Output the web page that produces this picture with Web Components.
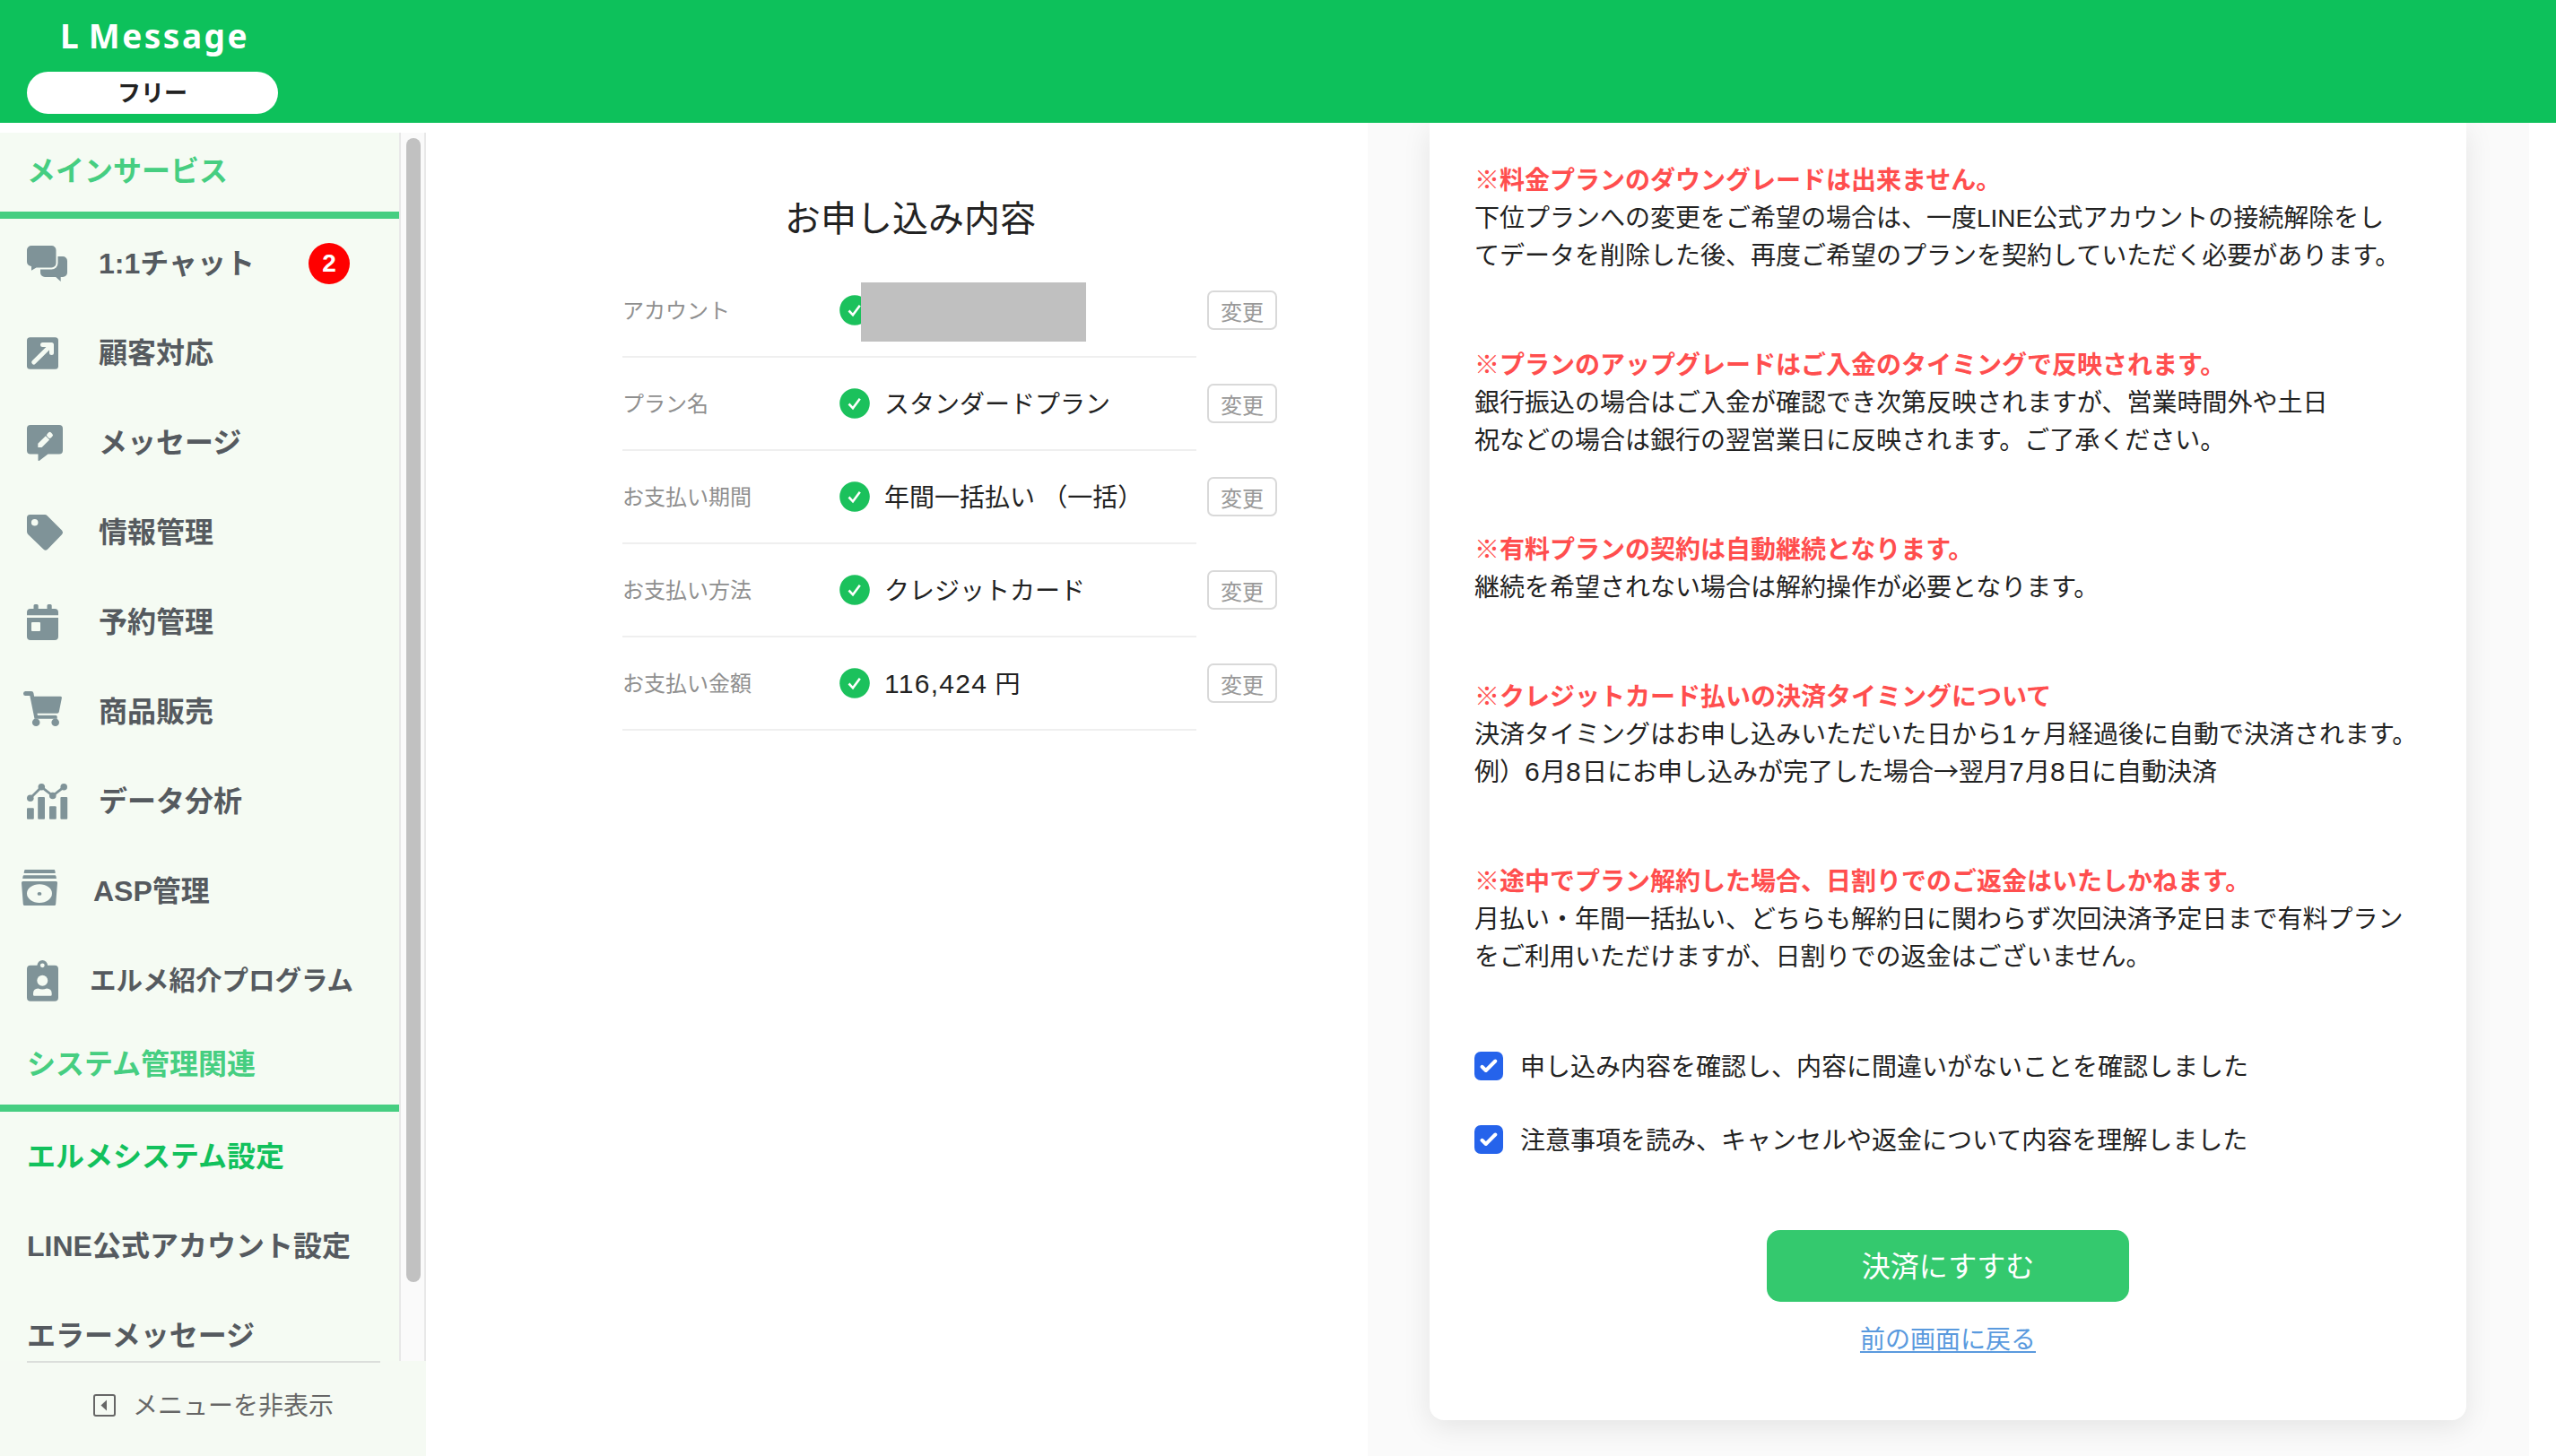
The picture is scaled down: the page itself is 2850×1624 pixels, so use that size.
<!DOCTYPE html>
<html lang="ja">
<head>
<meta charset="utf-8">
<title>L Message</title>
<style>
html, body {
  margin: 0;
  height: 100%;
}
body {
  display: flex;
  flex-direction: column;
  height: 1624px;
  overflow: hidden;
  background: #fff;
  color: #222;
  font-family: "Noto Sans CJK JP", sans-serif;
  font-size: 28px;
  line-height: 42px;
}
main {
  flex: 1;
  display: flex;
  min-height: 0;
}
.en, .num {
  font-family: "Liberation Sans", sans-serif;
  line-height: 0;
}
.num {
  font-size: 30px;
  letter-spacing: 1.3px;
}
</style>
</head>
<body>

<app-header plan="フリー">L Message</app-header>

<main>
  <side-nav>
    <nav-section>メインサービス</nav-section>
    <nav-item icon="chat" badge="2"><span class="en">1:1</span>チャット</nav-item>
    <nav-item icon="arrow">顧客対応</nav-item>
    <nav-item icon="message">メッセージ</nav-item>
    <nav-item icon="tag">情報管理</nav-item>
    <nav-item icon="calendar">予約管理</nav-item>
    <nav-item icon="cart">商品販売</nav-item>
    <nav-item icon="chart">データ分析</nav-item>
    <nav-item icon="asp" style="--icon-col: 104px"><span class="en">ASP</span>管理</nav-item>
    <nav-item icon="card" style="--icon-col: 100px; font-size: 29.5px">エルメ紹介プログラム</nav-item>
    <nav-section>システム管理関連</nav-section>
    <nav-item active>エルメシステム設定</nav-item>
    <nav-item><span class="en">LINE</span>公式アカウント設定</nav-item>
    <nav-item>エラーメッセージ</nav-item>
    <span slot="toggle">メニューを非表示</span>
  </side-nav>

  <order-summary heading="お申し込み内容">
    <summary-row label="アカウント" masked></summary-row>
    <summary-row label="プラン名">スタンダードプラン</summary-row>
    <summary-row label="お支払い期間">年間一括払い （一括）</summary-row>
    <summary-row label="お支払い方法">クレジットカード</summary-row>
    <summary-row label="お支払い金額"><span class="num">116,424</span> 円</summary-row>
  </order-summary>

  <confirm-panel>
    <notice-block heading="※料金プランのダウングレードは出来ません。">下位プランへの変更をご希望の場合は、一度<span class="en">LINE</span>公式アカウントの接続解除をし<br>てデータを削除した後、再度ご希望のプランを契約していただく必要があります。</notice-block>
    <notice-block heading="※プランのアップグレードはご入金のタイミングで反映されます。">銀行振込の場合はご入金が確認でき次第反映されますが、営業時間外や土日<br>祝などの場合は銀行の翌営業日に反映されます。ご了承ください。</notice-block>
    <notice-block heading="※有料プランの契約は自動継続となります。">継続を希望されない場合は解約操作が必要となります。</notice-block>
    <notice-block heading="※クレジットカード払いの決済タイミングについて">決済タイミングはお申し込みいただいた日から<span class="num">1</span>ヶ月経過後に自動で決済されます。<br>例）<span class="num">6</span>月<span class="num">8</span>日にお申し込みが完了した場合→翌月<span class="num">7</span>月<span class="num">8</span>日に自動決済</notice-block>
    <notice-block heading="※途中でプラン解約した場合、日割りでのご返金はいたしかねます。">月払い・年間一括払い、どちらも解約日に関わらず次回決済予定日まで有料プラン<br>をご利用いただけますが、日割りでの返金はございません。</notice-block>
    <check-item slot="checks">申し込み内容を確認し、内容に間違いがないことを確認しました</check-item>
    <check-item slot="checks">注意事項を読み、キャンセルや返金について内容を理解しました</check-item>
    <span slot="submit">決済にすすむ</span>
    <span slot="back">前の画面に戻る</span>
  </confirm-panel>
</main>

<script>
// Each icon is drawn in a 100x100 cell, the height of one menu row.
const ICONS = {
  chat: `
    <path d="M50 42h20a5 5 0 0 1 5 5v13a5 5 0 0 1-5 5h-2.3v5l-5.5-5H50a5 5 0 0 1-5-5V47a5 5 0 0 1 5-5z"/>
    <path stroke="#f5fbf3" stroke-width="4" paint-order="stroke" d="M35 30h22.500a5 5 0 0 1 5 5v14.500a5 5 0 0 1-5 5H40.500L35 57.700V53a5 5 0 0 1-5-5V35a5 5 0 0 1 5-5z"/>`,
  arrow: `
    <rect x="30" y="32.300" width="35" height="35.500" rx="3.500"/>
    <path fill="none" stroke="#f5fbf3" stroke-width="5" stroke-linecap="round" stroke-linejoin="round" d="M37.700 60L57 41M47.500 40.500h10v9"/>`,
  message: `
    <path d="M34 30h32a4 4 0 0 1 4 4v24.500a4 4 0 0 1-4 4H53.500L44 69.700q-1.500 1-1.500-.7v-6.500H34a4 4 0 0 1-4-4V34a4 4 0 0 1 4-4z"/>
    <path fill="#f5fbf3" d="M42.300 55v-4.300l8.600-8.500 4.300 4.300L46.600 55z"/>
    <rect fill="#f5fbf3" x="52.500" y="38.400" width="6" height="6" rx="2" transform="rotate(45 55.500 41.400)"/>`,
  tag: `
    <path fill-rule="evenodd" d="M33.500 30H50q1.500 0 2.700 1.200l16.500 16.500q1.700 2 0 4.300L53 68.800q-2.200 2-4.400 0L31.200 52Q30 50.500 30 49V33.500Q30 30 33.500 30zM38.700 34.900a3.800 3.800 0 1 0 0 7.600 3.800 3.800 0 0 0 0-7.600z"/>`,
  calendar: `
    <path fill-rule="evenodd" d="M37.500 35v-3.500q0-1.500 1.500-1.500h2.200q1.500 0 1.500 1.500V35h9.800v-3.500q0-1.500 1.500-1.500h2.200q1.500 0 1.500 1.500V35H61q4 0 4 4v3.300H30V39q0-4 4-4zM30 45h35v21q0 4-4 4H34q-4 0-4-4zM36 50q-1 0-1 1v8q0 1 1 1h8q1 0 1-1v-8q0-1-1-1z"/>`,
  cart: `
    <path d="M28.300 27H35q2 0 2.400 2l.7 3.700H67.500q1.800 0 1.400 1.800L65.800 50q-.4 1.700-2 1.700H41.500l.4 2H62q1.700 0 1.700 1.500v2.600H38.500L33.300 32h-5q-2.300 0-2.300-2.500T28.300 27z"/>
    <path stroke="#f5fbf3" stroke-width="1.400" d="M42 52.600h22"/>
    <circle cx="40.200" cy="61.700" r="4.300"/><circle cx="61.700" cy="61.700" r="4.300"/>`,
  chart: `
    <rect x="30" y="57.300" width="7.800" height="12.500" rx="1"/><rect x="42.200" y="45" width="7.800" height="24.800" rx="1"/>
    <rect x="55" y="55.200" width="7.800" height="14.600" rx="1"/><rect x="67.400" y="45" width="7.800" height="24.800" rx="1"/>
    <path fill="none" stroke="#7f9398" stroke-width="2.800" d="M33.800 46.200L46.300 33.800 58.800 43.500 71.200 33.800"/>
    <circle cx="33.800" cy="46.200" r="3.800"/><circle cx="46.300" cy="33.800" r="3.800"/><circle cx="58.800" cy="43.500" r="3.800"/><circle cx="71.200" cy="33.800" r="3.800"/>`,
  asp: `
    <path fill-rule="evenodd" d="M28 26h32.500q1 0 1.200 4H26.700q.3-4 1.300-4zM26.500 32.200h35q1.200 0 1.400 3.800H25.200q.2-3.800 1.300-3.800zM25.500 39h37q1.700 0 1.500 1.800L62.200 64.500Q62 66 60.500 66h-33q-1.500 0-1.700-1.500L24 40.800Q24 39 25.500 39zM44 42.300a14 10.300 0 1 0 0 20.600 14 10.300 0 0 0 0-20.600z"/>
    <ellipse cx="44" cy="52.900" rx="2.400" ry="1.900"/>`,
  card: `
    <rect x="30" y="32.700" width="35" height="40" rx="4"/><circle cx="47.300" cy="32.800" r="5.800"/>
    <g fill="#f5fbf3"><circle cx="47.300" cy="32.800" r="2.400"/><circle cx="47.300" cy="49.700" r="6"/>
    <path d="M42.500 58.500q4.800 2 9.600 0 5.600.3 5.600 5.500v1.500q0 1.300-1.300 1.300H38.300q-1.300 0-1.300-1.300V64q0-5.200 5.500-5.500z"/></g>`,
};

class AppHeader extends HTMLElement {
  constructor() {
    super();
    this.attachShadow({mode: 'open'}).innerHTML = `
<style>
:host {
  display: block;
  flex: none;
  box-sizing: border-box;
  height: 137px;
  padding: 15px 30px 0;
  background: #0dc15b;
}
.logo {
  height: 50px;
  padding-left: 37px;
  line-height: 50px;
  font-family: "Noto Sans", sans-serif;
  font-size: 37px;
  font-weight: 700;
  letter-spacing: 2.5px;
  word-spacing: -3.5px;
  color: #fff;
  white-space: nowrap;
}
.plan {
  width: 280px;
  height: 47px;
  margin-top: 15px;
  border-radius: 24px;
  background: #fff;
  text-align: center;
  font-size: 26px;
  font-weight: 700;
  line-height: 44px;
}
</style>
<div class="logo"><slot></slot></div>
<div class="plan">${this.getAttribute('plan')}</div>
    `;
  }
}

class SideNav extends HTMLElement {
  constructor() {
    super();
    this.attachShadow({mode: 'open'}).innerHTML = `
<style>
:host {
  display: flex;
  flex-direction: column;
  flex: none;
  width: 475px;
  padding-top: 11px;
}
.scroll {
  display: flex;
  flex: none;
  height: 1370px;
}
.list {
  width: 445px;
  overflow: hidden;
  background: #f5fbf3;
}
.track {
  box-sizing: border-box;
  width: 30px;
  padding: 6px 4px 0 6px;
  border: solid #e8e8e8;
  border-width: 0 2px;
  background: #fafafa;
}
.thumb {
  width: 16px;
  height: 1276px;
  border-radius: 8px;
  background: #c1c1c1;
}
.foot {
  flex: 1;
  background: #f5faf3;
}
.toggle {
  display: flex;
  align-items: center;
  gap: 19px;
  box-sizing: border-box;
  width: 394px;
  height: 97px;
  margin-left: 30px;
  padding-left: 74px;
  border-top: 2px solid #dbdedb;
  color: #666;
}
.toggle span {
  margin-top: -3px;
}
</style>
<div class="scroll">
  <div class="list"><slot></slot></div>
  <div class="track"><div class="thumb"></div></div>
</div>
<div class="foot">
  <div class="toggle">
    <svg width="25" height="25" viewBox="0 0 25 25"><rect x="1" y="1" width="23" height="23" rx="2" fill="none" stroke="#666" stroke-width="2"/><path fill="#666" d="M15 6.500v12L8.500 12.500z"/></svg>
    <span><slot name="toggle"></slot></span>
  </div>
</div>
    `;
  }
}

class NavSection extends HTMLElement {
  constructor() {
    super();
    this.attachShadow({mode: 'open'}).innerHTML = `
<style>
:host {
  display: block;
  height: 88px;
  padding-left: 30px;
  border-bottom: 8px solid #46ce81;
  color: #46ce81;
  font-size: 32px;
  font-weight: 700;
  line-height: 81px;
}
</style>
<slot></slot>
    `;
  }
}

class NavItem extends HTMLElement {
  constructor() {
    super();
    const icon = ICONS[this.getAttribute('icon')];
    const badge = this.getAttribute('badge');
    this.attachShadow({mode: 'open'}).innerHTML = `
<style>
:host {
  display: flex;
  align-items: center;
  height: 100px;
  color: #555a5f;
  font-size: 32px;
  font-weight: 700;
  line-height: 48px;
  white-space: nowrap;
}
:host([active]) {
  color: #12c15d;
}
.icon {
  flex: none;
  width: var(--icon-col, 110px);
  height: 100px;
}
.icon svg {
  display: block;
  fill: #7f9398;
}
.gap {
  width: 30px;
}
.text {
  margin-top: -7px;
}
.badge {
  width: 46px;
  height: 46px;
  margin-left: auto;
  margin-right: 55px;
  border-radius: 50%;
  background: #f00;
  color: #fff;
  text-align: center;
  font: 700 28px/46px "Liberation Sans", sans-serif;
}
</style>
${icon ? `<div class="icon"><svg width="100" height="100" viewBox="0 0 100 100">${icon}</svg></div>` : '<div class="gap"></div>'}
<div class="text"><slot></slot></div>
${badge ? `<div class="badge">${badge}</div>` : ''}
    `;
  }
}

class OrderSummary extends HTMLElement {
  constructor() {
    super();
    this.attachShadow({mode: 'open'}).innerHTML = `
<style>
:host {
  display: block;
  flex: none;
  box-sizing: border-box;
  width: 1050px;
  padding: 74px 100px 0 219px;
}
h1 {
  margin: 0 0 24px;
  width: 642px;
  text-align: center;
  font-size: 40px;
  font-weight: 400;
  line-height: 60px;
}
</style>
<h1>${this.getAttribute('heading')}</h1>
<slot></slot>
    `;
  }
}

class SummaryRow extends HTMLElement {
  constructor() {
    super();
    this.attachShadow({mode: 'open'}).innerHTML = `
<style>
:host {
  display: flex;
  align-items: center;
  position: relative;
  height: 104px;
}
.line {
  display: flex;
  align-items: center;
  box-sizing: border-box;
  width: 640px;
  height: 104px;
  margin-right: 12px;
  border-bottom: 2px solid #efefef;
}
.label {
  width: 242px;
  margin-top: -3px;
  color: #8f8f8f;
  font-size: 24px;
}
.value {
  margin-top: -3px;
  word-spacing: 2px;
}
svg {
  margin-right: 16px;
}
button {
  box-sizing: border-box;
  width: 78px;
  height: 44px;
  margin: 0 0 2px;
  padding: 0;
  border: 2px solid #d9d9d9;
  border-radius: 7px;
  background: #fff;
  color: #999;
  font: inherit;
  font-size: 24px;
  line-height: 37px;
}
/* grey plate over the account name */
.mask {
  position: absolute;
  left: 266px;
  top: 20px;
  width: 251px;
  height: 66px;
  background: #c0c0c0;
}
</style>
<div class="line">
  <div class="label">${this.getAttribute('label')}</div>
  <svg width="34" height="34" viewBox="0 0 34 34"><circle cx="17" cy="17" r="16.800" fill="#1bc15c"/><path d="M10.500 17.500l4.500 4.800 7.800-10.500" fill="none" stroke="#fff" stroke-width="2.600"/></svg>
  <div class="value"><slot></slot></div>
</div>
<button>変更</button>
${this.hasAttribute('masked') ? '<div class="mask"></div>' : ''}
    `;
  }
}

class ConfirmPanel extends HTMLElement {
  constructor() {
    super();
    this.attachShadow({mode: 'open'}).innerHTML = `
<style>
:host {
  display: block;
  flex: none;
  box-sizing: border-box;
  width: 1295px;
  padding: 0 70px 40px 69px;
  background: #fafafa;
  overflow: hidden;
}
.card {
  display: flex;
  flex-direction: column;
  box-sizing: border-box;
  width: 1156px;
  height: 1447px;
  padding: 41px 50px 0;
  border-radius: 0 0 16px 16px;
  background: #fff;
  box-shadow: 0 8px 32px rgba(0, 0, 0, 0.09);
}
.checks {
  display: flex;
  flex-direction: column;
  gap: 40px;
  margin: 2px 0 80px;
}
.actions {
  display: flex;
  flex-direction: column;
  align-items: center;
}
button {
  width: 404px;
  height: 80px;
  margin: 0 0 19px;
  padding: 0 0 4px;
  border: 0;
  border-radius: 15px;
  background: #34c96e;
  color: #fff;
  font: inherit;
  font-size: 32px;
}
a {
  color: #5a9ade;
  text-decoration: underline;
  text-decoration-thickness: 2px;
  text-underline-offset: 3px;
}
</style>
<div class="card">
  <slot></slot>
  <div class="checks"><slot name="checks"></slot></div>
  <div class="actions">
    <button><slot name="submit"></slot></button>
    <a><slot name="back"></slot></a>
  </div>
</div>
    `;
  }
}

class NoticeBlock extends HTMLElement {
  constructor() {
    super();
    this.attachShadow({mode: 'open'}).innerHTML = `
<style>
:host {
  display: block;
  margin-bottom: 80px;
  white-space: nowrap;
}
.heading {
  color: #ff4e4e;
  font-weight: 700;
}
</style>
<div class="heading">${this.getAttribute('heading')}</div>
<div><slot></slot></div>
    `;
  }
}

class CheckItem extends HTMLElement {
  constructor() {
    super();
    this.attachShadow({mode: 'open'}).innerHTML = `
<style>
:host {
  display: flex;
  align-items: center;
  gap: 19px;
  height: 42px;
  white-space: nowrap;
}
span {
  margin-top: -3px;
}
</style>
<svg width="32" height="32" viewBox="0 0 32 32"><rect width="32" height="32" rx="7" fill="#2563eb"/><path d="M8.500 16.800l4.300 4.200 10.500-10.500" fill="none" stroke="#fff" stroke-width="4" stroke-linecap="round" stroke-linejoin="round"/></svg>
<span><slot></slot></span>
    `;
  }
}

customElements.define('app-header', AppHeader);
customElements.define('side-nav', SideNav);
customElements.define('nav-section', NavSection);
customElements.define('nav-item', NavItem);
customElements.define('order-summary', OrderSummary);
customElements.define('summary-row', SummaryRow);
customElements.define('confirm-panel', ConfirmPanel);
customElements.define('notice-block', NoticeBlock);
customElements.define('check-item', CheckItem);
</script>
</body>
</html>
